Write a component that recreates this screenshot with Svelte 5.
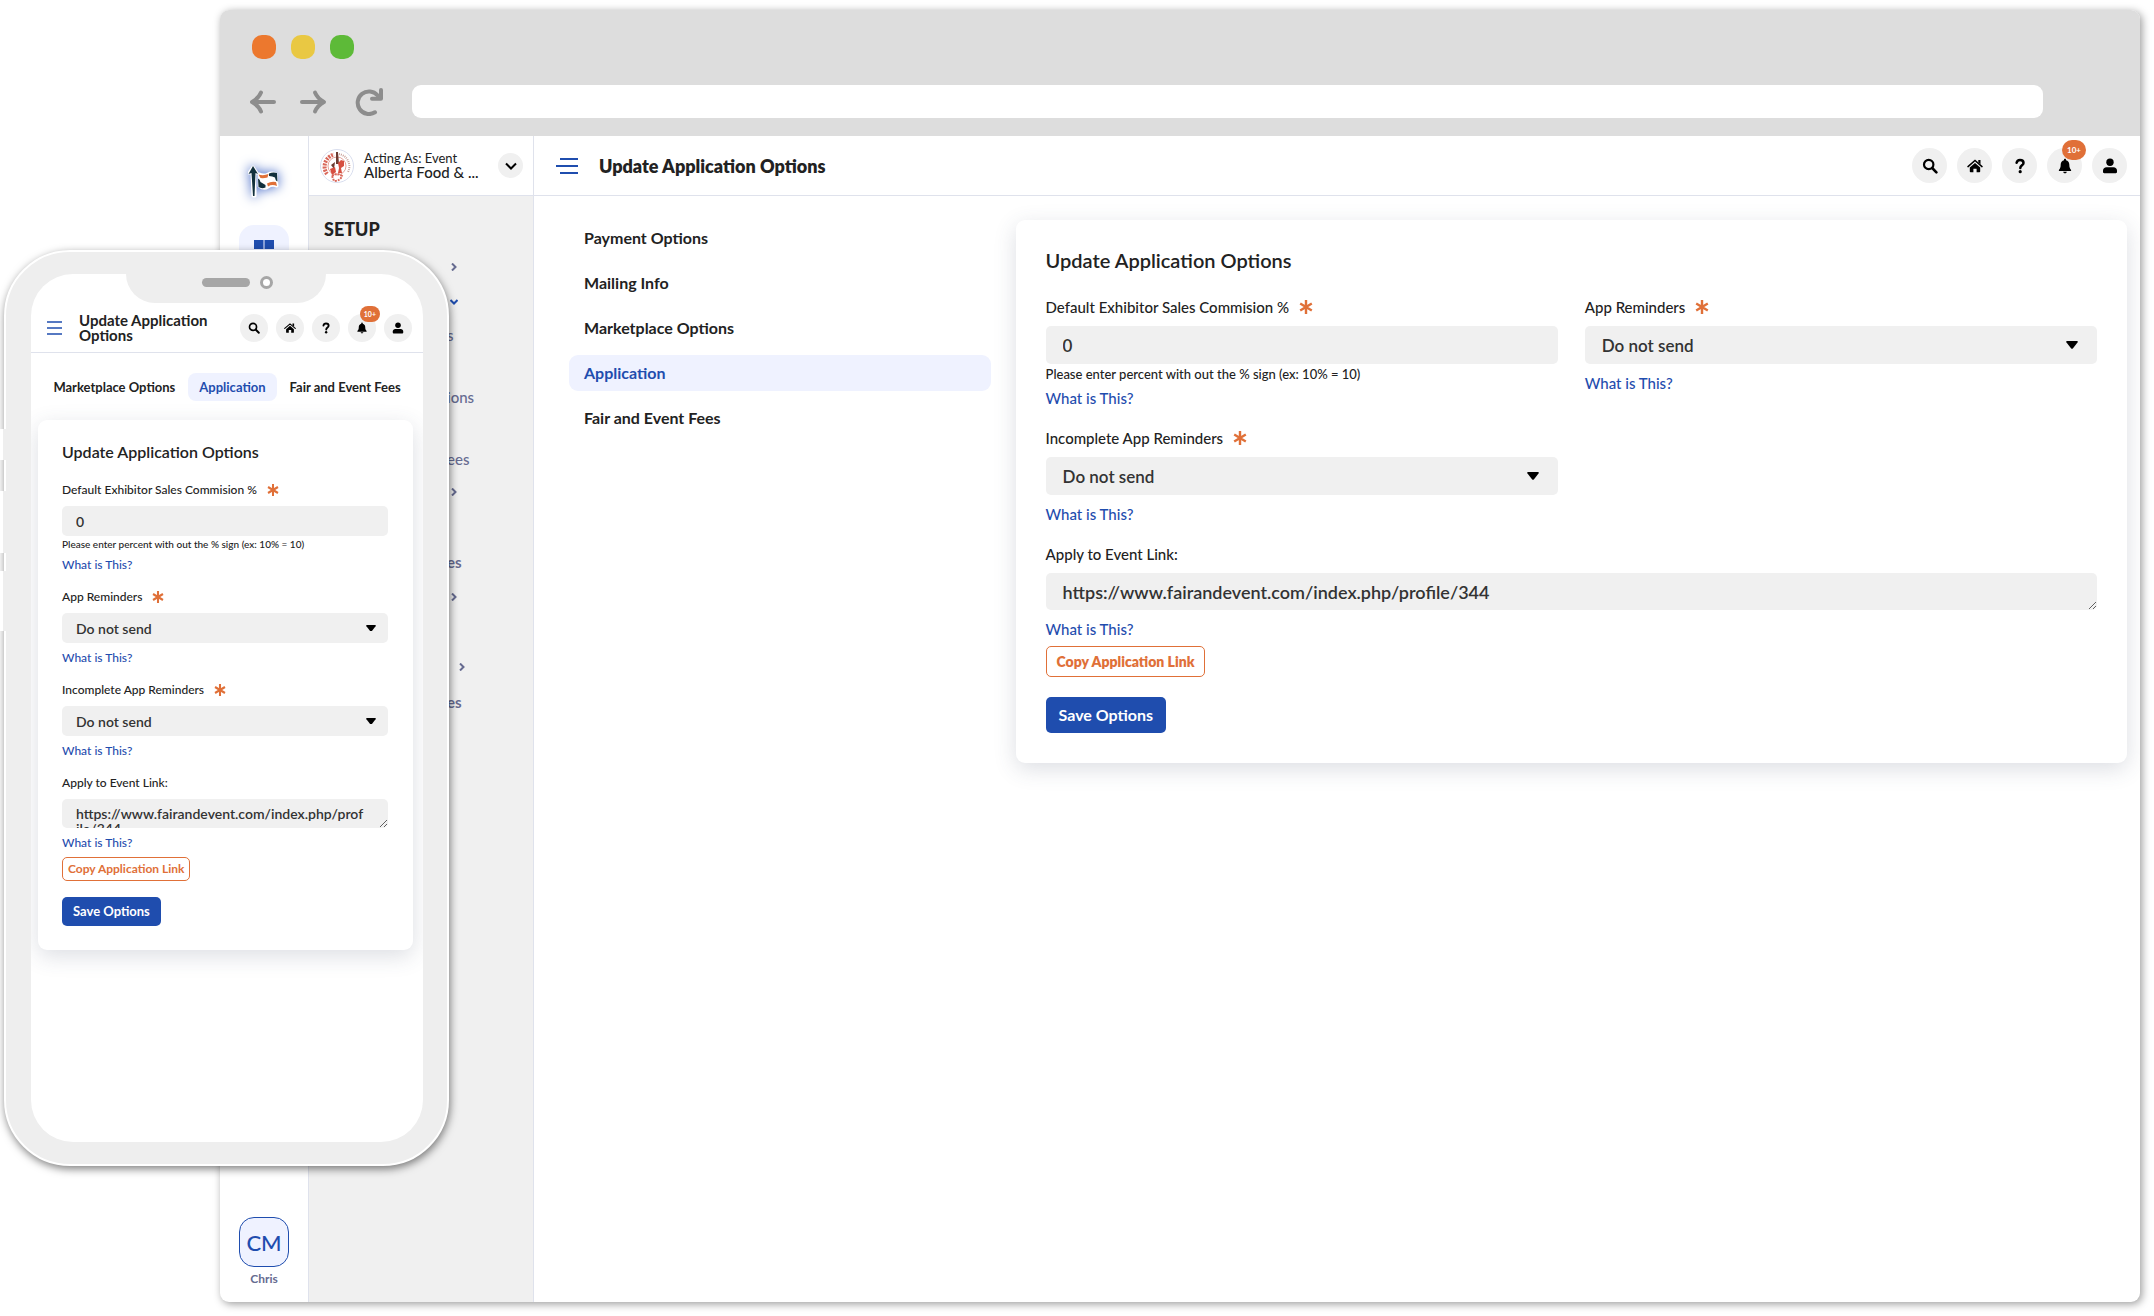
<script>
  const title = 'Update Application Options';

  const menu = [
    'Payment Options',
    'Mailing Info',
    'Marketplace Options',
    'Application',
    'Fair and Event Fees'
  ];
  const tabs = menu.slice(2);
  let active = $state('Application');

  // the phone covers the start of every label, only the tails are left
  const sections = [
    { arrow: 'right' },
    { arrow: 'down' },
    { label: 's', sub: true },
    { sub: true },
    { label: 'ions', sub: true },
    { sub: true },
    { label: 'ees', sub: true },
    { arrow: 'right' },
    {},
    { label: 'es' },
    { arrow: 'right' },
    {},
    { arrow: 'right', far: true },
    { label: 'es' }
  ];

  const tools = ['search', 'home', 'help', 'alerts', 'account'];

  let form = $state({
    commission: '0',
    appReminders: 'none',
    incompleteReminders: 'none',
    link: 'https://www.fairandevent.com/index.php/profile/344'
  });

  function copyLink() {
    navigator.clipboard?.writeText(form.link);
  }
</script>

{#snippet star()}
  <svg class="star" viewBox="0 0 14 16" aria-hidden="true">
    <path d="M7 1v14M1.2 4.5l11.6 7M12.8 4.5l-11.6 7" />
  </svg>
{/snippet}

{#snippet toolIcon(name)}
  <svg viewBox="0 0 16 16" aria-hidden="true">
    {#if name === 'search'}
      <circle cx="6.7" cy="6.5" r="4.7" fill="none" stroke="#000" stroke-width="2.2" />
      <path d="M10.2 10l4.2 4.3" stroke="#000" stroke-width="2.6" stroke-linecap="round" />
    {:else if name === 'home'}
      <path d="M1 8.6L8 2.5l7 6.1" fill="none" stroke="#000" stroke-width="1.5" stroke-linecap="round" />
      <path d="M11.3 2h2.2v4.3l-2.2-1.9z" />
      <path d="M8 5l5.2 4.5v4a.8.8 0 0 1-.8.8H9.6v-3.6H6.4v3.6H3.6a.8.8 0 0 1-.8-.8v-4z" />
    {:else if name === 'help'}
      <path
        d="M4.6 4.8C5 2.9 6.2 2 8 2c2.1 0 3.5 1.2 3.5 2.9C11.5 7.4 8.3 7.2 8.3 10"
        fill="none"
        stroke="#000"
        stroke-width="2.5"
        stroke-linecap="round"
      />
      <circle cx="8.2" cy="13.7" r="1.6" />
    {:else if name === 'alerts'}
      <path d="M8 .8c.6 0 1 .4 1 1v.5c2 .5 3.3 2.2 3.3 4.2 0 3 .7 4.2 1.7 5.2.5.6.1 1.3-.6 1.3H2.6c-.7 0-1.1-.7-.6-1.3 1-1 1.7-2.2 1.7-5.2 0-2 1.3-3.7 3.3-4.2v-.5c0-.6.4-1 1-1zM6.2 13.8h3.6c-.2 1-.9 1.5-1.8 1.5s-1.6-.5-1.8-1.5z" />
    {:else}
      <circle cx="8" cy="4.3" r="3.7" />
      <path d="M4.5 9.3h7c2 0 3.5 1.5 3.5 3.5v1.2c0 .7-.5 1.2-1.2 1.2H2.2c-.7 0-1.2-.5-1.2-1.2v-1.2c0-2 1.5-3.5 3.5-3.5z" />
    {/if}
  </svg>
{/snippet}

{#snippet toolbar()}
  <div class="tools">
    {#each tools as name}
      <button class="tool" aria-label={name}>
        {@render toolIcon(name)}
        {#if name === 'alerts'}<span class="badge">10+</span>{/if}
      </button>
    {/each}
  </div>
{/snippet}

{#snippet reminders(id, label, key)}
  <div class="field">
    <label for={id}>{label} {@render star()}</label>
    <div class="select">
      <select {id} bind:value={form[key]}>
        <option value="none">Do not send</option>
      </select>
      <svg viewBox="0 0 12 8" aria-hidden="true"><path d="M1 0h10q1.3.3.5 1.5L7 7.3q-1 1-2 0L.5 1.5Q-.3.3 1 0z" /></svg>
    </div>
    <a href="#help">What is This?</a>
  </div>
{/snippet}

{#snippet options(prefix)}
  <form class="card" onsubmit={(e) => e.preventDefault()}>
    <h2>{title}</h2>
    <div class="fields">
      <div class="field">
        <label for="{prefix}-commission">Default Exhibitor Sales Commision % {@render star()}</label>
        <input id="{prefix}-commission" type="text" bind:value={form.commission} />
        <small>Please enter percent with out the % sign (ex: 10% = 10)</small>
        <a href="#help">What is This?</a>
      </div>
      {@render reminders(`${prefix}-app`, 'App Reminders', 'appReminders')}
      {@render reminders(`${prefix}-incomplete`, 'Incomplete App Reminders', 'incompleteReminders')}
      <div class="field wide">
        <label for="{prefix}-link">Apply to Event Link:</label>
        <textarea id="{prefix}-link" rows="1" spellcheck="false" bind:value={form.link}></textarea>
        <a href="#help">What is This?</a>
        <button type="button" class="copy" onclick={copyLink}>Copy Application Link</button>
      </div>
    </div>
    <button class="save">Save Options</button>
  </form>
{/snippet}

<div class="stage">
  <div class="browser">
    <div class="chrome">
      <div class="lights">
        <span class="light close"></span>
        <span class="light minimize"></span>
        <span class="light expand"></span>
      </div>
      <div class="navigation">
        <svg viewBox="0 0 28 28" aria-hidden="true"><path d="M25 14H4M12 4.5Q9.5 10.5 3 14Q9.5 17.5 12 23.5" /></svg>
        <svg viewBox="0 0 28 28" aria-hidden="true"><path d="M3 14h21M16 4.5Q18.5 10.5 25 14Q18.5 17.5 16 23.5" /></svg>
        <svg class="reload" viewBox="0 0 28 28" aria-hidden="true"><path d="M20 24.3A11.3 11.3 0 1 1 22.5 7.3M26 2v8.700h-9" /></svg>
        <input class="address" type="text" aria-label="Address" />
      </div>
    </div>

    <div class="app">
      <aside class="rail">
        <svg class="logo" viewBox="0 0 32 34" aria-hidden="true">
          <path class="outline" d="M5 2L1 8h3l1 23h2L7 8h2zM11 9q5 2 9 0t8 0l1 12q-5-2-9 1t-9-1z" />
          <path d="M5 1L.5 9l3-1L5 31h1.500L7.500 8 10 9z" fill="#12303c" />
          <path d="M11 9q5 2 9 0t8 0l1 12q-5-2-9 1t-9-1z" fill="#fff" />
          <path d="M10.5 9.5q5 1.5 10-.5l-1 3.5q-4 1-7 .5zM19 18.5q4-2.5 9-1.5l1 4q-5-2-9 .5z" fill="#e07038" />
          <path d="M21 8.500q4-1.500 8-.5l.5 8.500q-2-.5-2.500-4-2.500-1.500-6-1.500zM10 13.500q2 .5 2.500 3.500l5 3v2.500q-4 1.500-7-.5z" fill="#12303c" />
        </svg>
        <a class="tile" href="#dashboard" aria-label="Dashboard">
          <svg viewBox="0 0 20 20" aria-hidden="true"><path d="M0 0h9.5v9H0zM10.5 0H20v9h-9.5zM0 10h9.5v9H0zM10.5 10H20v9h-9.5z" /></svg>
        </a>
        <div class="user">
          <button class="initials">CM</button>
          <span>Chris</span>
        </div>
      </aside>

      <aside class="sidebar">
        <div class="acting">
          <svg class="seal" viewBox="0 0 34 34" aria-hidden="true">
            <circle cx="17" cy="17" r="16.5" fill="#fff" stroke="#d9deee" />
            <path d="M7 25A12.5 12.5 0 0 1 14 5.5" fill="none" stroke="#d9685b" stroke-width="4" stroke-dasharray="2 1" />
            <path d="M19 5A12.5 12.5 0 0 1 28 23" fill="none" stroke="#c9a29b" stroke-width="2" stroke-dasharray="1 1" />
            <circle cx="17" cy="17" r="9" fill="none" stroke="#e08a80" stroke-width=".8" />
            <path d="M16 3h2l1 12h-3zM11 16l4-3-1 7z" fill="#6d3a30" />
            <path d="M18 14l3-3 3 1v5l-3 2 1 5h-4l1-5zM10 20l5-2 1 5-4 3z" fill="#d64f40" />
            <path d="M12 27q5-4 10 0-2 5-8 5z" fill="none" stroke="#d9685b" stroke-width="2" stroke-dasharray="2 1" />
          </svg>
          <div class="who">
            <span>Acting As: Event</span>
            <strong>Alberta Food &amp; ...</strong>
          </div>
          <button class="switch" aria-label="Switch event">
            <svg viewBox="0 0 12 8" aria-hidden="true"><path d="M1 1.5l5 5 5-5" /></svg>
          </button>
        </div>
        <h3>SETUP</h3>
        <ul class="sections">
          {#each sections as { label, arrow, sub, far }}
            <li class:sub class:far>
              {#if arrow}
                <svg class={['arrow', arrow]} viewBox="0 0 8 8" aria-hidden="true"><path d="M2 .5L5.5 4 2 7.5" /></svg>
              {:else}
                {label}
              {/if}
            </li>
          {/each}
        </ul>
      </aside>

      <main>
        <header class="topbar">
          <button class="burger" aria-label="Toggle sidebar">
            <svg viewBox="0 0 22 18" aria-hidden="true"><path d="M4 2h18M0 9h22M4 16h18" /></svg>
          </button>
          <h1>{title}</h1>
          {@render toolbar()}
        </header>
        <div class="content">
          <nav class="menu">
            {#each menu as item}
              <a href="#options" class:active={item === active} onclick={() => (active = item)}>{item}</a>
            {/each}
          </nav>
          {@render options('desktop')}
        </div>
      </main>
    </div>
  </div>

  <div class="phone">
    <i class="key mute"></i>
    <i class="key up"></i>
    <i class="key down"></i>
    <div class="screen">
      <div class="notch">
        <span class="speaker"></span>
        <span class="camera"></span>
      </div>
      <header class="topbar">
        <button class="burger" aria-label="Toggle sidebar">
          <svg viewBox="0 0 15 14" aria-hidden="true"><path d="M0 1h15M0 7h15M0 13h15" /></svg>
        </button>
        <h1>{title}</h1>
        {@render toolbar()}
      </header>
      <nav class="tabs">
        {#each tabs as item}
          <a href="#options" class:active={item === active} onclick={() => (active = item)}>{item}</a>
        {/each}
      </nav>
      {@render options('phone')}
    </div>
  </div>
</div>

<style>
  :global(body) {
    margin: 0;
    background: #fff;
  }

  .stage {
    --blue: #1f4dae;
    --orange: #e07038;
    --line: #dfe2ec;
    --tint: #eff2ff;
    --grey: #f0f0f0;
    --muted: #666b90;

    box-sizing: border-box;
    position: relative;
    display: flex;
    min-height: 100vh;
    padding: 10px 14px 14px 220px;
    color: #222;
    font-family: Lato, 'Open Sans', sans-serif;
  }

  .stage :global(*) {
    box-sizing: border-box;
  }

  h1,
  h2,
  h3,
  ul {
    margin: 0;
    padding: 0;
  }

  a {
    color: var(--blue);
    text-decoration: none;
  }

  button {
    border: 0;
    padding: 0;
    font-family: inherit;
    cursor: pointer;
  }

  .browser {
    flex: 1;
    display: flex;
    flex-direction: column;
    border-radius: 9px;
    overflow: hidden;
    background: #fff;
    box-shadow: 2px 2px 8px rgba(0, 0, 0, 0.4);
  }

  .chrome {
    padding: 25px 97px 18px 29px;
    background: #ddd;
  }

  .lights {
    display: flex;
    gap: 15px;
    padding-left: 3px;
  }

  .light {
    width: 24px;
    height: 24px;
    border-radius: 10px;
  }

  .close {
    background: #ec782e;
  }

  .minimize {
    background: #e9c843;
  }

  .expand {
    background: #5dba38;
  }

  .navigation {
    display: flex;
    align-items: center;
    gap: 22px;
    margin-top: 26px;

    svg {
      width: 28px;
      height: 28px;
      fill: none;
      stroke: #8d8d8d;
      stroke-width: 4;
      stroke-linecap: round;
      stroke-linejoin: round;
    }

    .reload {
      margin: 0 7px 0 6px;
    }
  }

  .address {
    flex: 1;
    height: 33px;
    border: 0;
    border-radius: 9px;
    background: #fff;
  }

  .app {
    flex: 1;
    display: grid;
    grid-template-columns: 89px 225px minmax(0, 1fr);
  }

  .rail {
    display: flex;
    flex-direction: column;
    align-items: center;
    padding: 29px 0 16px;
    border-right: 1px solid var(--line);
  }

  .logo {
    width: 32px;
    height: 34px;
    filter: drop-shadow(0 0 6px #3c62c4);

    .outline {
      fill: #fff;
      stroke: #fff;
      stroke-width: 3;
      stroke-linejoin: round;
    }
  }

  .tile {
    display: grid;
    place-items: center;
    width: 50px;
    height: 50px;
    margin-top: 26px;
    border-radius: 15px;
    background: var(--tint);

    svg {
      width: 20px;
      fill: var(--blue);
    }
  }

  .user {
    display: flex;
    flex-direction: column;
    align-items: center;
    gap: 5px;
    margin-top: auto;
    color: var(--muted);
    font-size: 12px;
    font-weight: 700;
    line-height: 14px;
  }

  .initials {
    width: 50px;
    height: 50px;
    border: 1px solid var(--blue);
    border-radius: 15px;
    background: var(--tint);
    color: var(--blue);
    font-size: 22px;
    font-weight: 500;
  }

  .sidebar {
    border-right: 1px solid var(--line);
    background: var(--grey);

    h3 {
      padding: 22px 15px 9px;
      font-size: 18px;
      font-weight: 900;
      line-height: 22px;
    }
  }

  .acting {
    display: flex;
    align-items: center;
    height: 60px;
    padding: 0 10px 0 11px;
    border-bottom: 1px solid var(--line);
    background: #fff;
  }

  .seal {
    width: 34px;
    height: 34px;
  }

  .who {
    flex: 1;
    display: flex;
    flex-direction: column;
    padding: 0 0 2px 10px;
    font-size: 13px;
    line-height: 14px;
    white-space: nowrap;

    strong {
      font-size: 15px;
      font-weight: 500;
    }
  }

  .switch {
    display: grid;
    place-items: center;
    width: 25px;
    height: 25px;
    border-radius: 50%;
    background: var(--grey);

    svg {
      width: 12px;
      fill: none;
      stroke: #000;
      stroke-width: 2;
    }
  }

  .sections {
    list-style: none;
    padding-left: 138px;
    color: var(--muted);
    font-size: 15px;
    font-weight: 700;

    li {
      display: flex;
      align-items: center;
      height: 35px;
    }

    .sub {
      height: 31px;
      font-weight: 500;
    }

    .arrow {
      width: 8px;
      margin-left: 3px;
      fill: none;
      stroke: var(--muted);
      stroke-width: 2;
    }

    .far .arrow {
      margin-left: 11px;
    }

    .down {
      stroke: var(--blue);
      transform: rotate(90deg);
    }
  }

  .topbar {
    display: flex;
    align-items: center;
    border-bottom: 1px solid var(--line);
  }

  main .topbar {
    height: 60px;
    padding: 0 13px 0 22px;

    h1 {
      flex: 1;
      padding-left: 21px;
      font-size: 18px;
      font-weight: 800;
      line-height: 20px;
    }
  }

  .burger {
    display: grid;
    background: none;

    svg {
      width: 22px;
      stroke: var(--blue);
      stroke-width: 2;
    }
  }

  .tools {
    display: flex;
    gap: 10px;
  }

  .tool {
    position: relative;
    display: grid;
    place-items: center;
    width: 35px;
    height: 35px;
    border-radius: 50%;
    background: var(--grey);

    svg {
      width: 16px;
    }
  }

  .badge {
    position: absolute;
    top: -8px;
    right: -4px;
    padding: 0 5px;
    border-radius: 10px;
    background: var(--orange);
    color: #fff;
    font-size: 8px;
    font-weight: 700;
    line-height: 20px;
  }

  .content {
    display: grid;
    grid-template-columns: minmax(0, 11fr) minmax(0, 29fr);
    align-items: start;
    gap: 25px;
    padding: 24px 13px 24px 35px;
  }

  .menu {
    display: flex;
    flex-direction: column;
    gap: 9px;

    a {
      padding: 0 15px;
      border-radius: 9px;
      color: #222;
      font-size: 16px;
      font-weight: 700;
      line-height: 36px;
    }
  }

  nav a.active {
    background: var(--tint);
    color: var(--blue);
  }

  .card {
    --label: 15px;
    --label-line: 20px;
    --value: 17px;
    --url: 18px;
    --control: 38px;
    --area: 37px;
    --pad: 17px;
    --hint: 13px;
    --hint-line: 16px;
    --space: 9px;

    padding: 28px 30px 30px;
    border-radius: 9px;
    background: #fff;
    box-shadow: 0 6px 22px rgba(60, 70, 100, 0.18);

    h2 {
      margin-bottom: 25px;
      font-size: 20px;
      font-weight: 600;
      line-height: 24px;
    }
  }

  .fields {
    display: grid;
    grid-template-columns: 1fr 1fr;
    gap: 20px 27px;
  }

  .wide {
    grid-column: 1 / -1;
  }

  .field {
    display: flex;
    flex-direction: column;
    align-items: flex-start;
    font-size: var(--label);
    line-height: var(--label-line);

    label {
      display: flex;
      align-items: center;
      gap: 10px;
      margin-bottom: var(--space);
      font-weight: 500;
    }

    a {
      margin-top: var(--space);
      font-weight: 500;
    }

    small {
      margin-top: 2px;
      font-size: var(--hint);
      font-weight: 500;
      line-height: var(--hint-line);
    }

    small + a {
      margin-top: 6px;
    }

    input,
    select,
    textarea {
      width: 100%;
      height: var(--control);
      margin: 0;
      border: 0;
      border-radius: 5px;
      padding: 0 var(--pad);
      background: var(--grey);
      color: #333;
      font-family: inherit;
      font-size: var(--value);
      font-weight: 600;
    }

    select {
      appearance: none;
    }

    textarea {
      height: var(--area);
      padding: 9px var(--pad) 0;
      font-size: var(--url);
      line-height: 20px;
      overflow: hidden;
      resize: vertical;
      word-break: break-all;
    }
  }

  .star {
    width: 14px;
    height: 16px;
    stroke: var(--orange);
    stroke-width: 2.4;
  }

  .select {
    display: flex;
    align-items: center;
    width: 100%;

    svg {
      flex: none;
      width: 12px;
      margin-left: -31px;
      pointer-events: none;
    }
  }

  .copy {
    margin-top: 7px;
    padding: 0 10px;
    border: 1px solid var(--orange);
    border-radius: 5px;
    background: #fff;
    color: var(--orange);
    font-size: 14px;
    font-weight: 800;
    line-height: 29px;
  }

  .save {
    margin-top: 20px;
    padding: 0 13px;
    border-radius: 5px;
    background: var(--blue);
    color: #fff;
    font-size: 16px;
    font-weight: 700;
    line-height: 36px;
  }

  .phone {
    position: absolute;
    top: 250px;
    left: 4px;
    width: 445px;
    height: 916px;
    padding: 22px 24px 22px 25px;
    border: 2px solid #fff;
    border-radius: 66px;
    background: #eee;
    box-shadow: 1px 3px 8px rgba(0, 0, 0, 0.5);
  }

  .key {
    position: absolute;
    left: -6px;
    width: 8px;
    border-left: 3px solid #fff;
    background: #eee;
  }

  .mute {
    top: 177px;
    height: 31px;
  }

  .up {
    top: 239px;
    height: 62px;
  }

  .key.down {
    top: 319px;
    height: 60px;
  }

  .screen {
    height: 100%;
    border-radius: 42px;
    overflow: hidden;
    background: #fff;

    .topbar {
      height: 50px;
      padding: 0 11px 0 16px;

      h1 {
        flex: 1;
        padding-left: 17px;
        font-size: 15px;
        font-weight: 700;
        line-height: 15px;
      }
    }

    .burger svg {
      width: 15px;
      stroke-width: 1.4;
    }

    .tools {
      gap: 8px;
    }

    .tool {
      width: 28px;
      height: 28px;

      svg {
        width: 12px;
      }
    }

    .badge {
      padding: 0 4px;
      border-radius: 8px;
      font-size: 7px;
      line-height: 16px;
    }

    .card {
      --label: 12px;
      --label-line: 16px;
      --value: 14px;
      --url: 14px;
      --control: 30px;
      --area: 29px;
      --pad: 14px;
      --hint: 10px;
      --hint-line: 12px;
      --space: 8px;

      margin: 19px 10px 0 7px;
      padding: 22px 25px 24px 24px;

      h2 {
        margin-bottom: 20px;
        font-size: 16px;
        line-height: 20px;
      }
    }

    .fields {
      grid-template-columns: 1fr;
      gap: 16px;
    }

    .field {
      a {
        margin-top: 7px;
      }

      textarea {
        padding: 7px 23px 0 14px;
        line-height: 15px;
      }
    }

    .star {
      width: 12px;
    }

    .select svg {
      width: 10px;
      margin-left: -22px;
    }

    .copy {
      margin-top: 6px;
      padding: 0 5px;
      font-size: 12px;
      font-weight: 700;
      line-height: 22px;
    }

    .save {
      margin-top: 16px;
      padding: 0 11px;
      font-size: 13px;
      line-height: 29px;
    }
  }

  .notch {
    display: flex;
    align-items: flex-start;
    justify-content: flex-end;
    gap: 10px;
    width: 200px;
    height: 29px;
    margin: 0 0 0 95px;
    padding: 2px 53px 0 0;
    border-radius: 0 0 29px 29px;
    background: #eee;
  }

  .speaker {
    width: 48px;
    height: 9px;
    margin-top: 2px;
    border-radius: 5px;
    background: #a6a6a6;
  }

  .camera {
    width: 13px;
    height: 13px;
    border: 3px solid #a6a6a6;
    border-radius: 50%;
    background: #fff;
  }

  .tabs {
    display: flex;
    justify-content: center;
    gap: 2px;
    padding: 20px 0 0;

    a {
      padding: 0 11px;
      border-radius: 8px;
      color: #222;
      font-size: 13px;
      font-weight: 700;
      line-height: 28px;
      white-space: nowrap;
    }
  }
</style>
